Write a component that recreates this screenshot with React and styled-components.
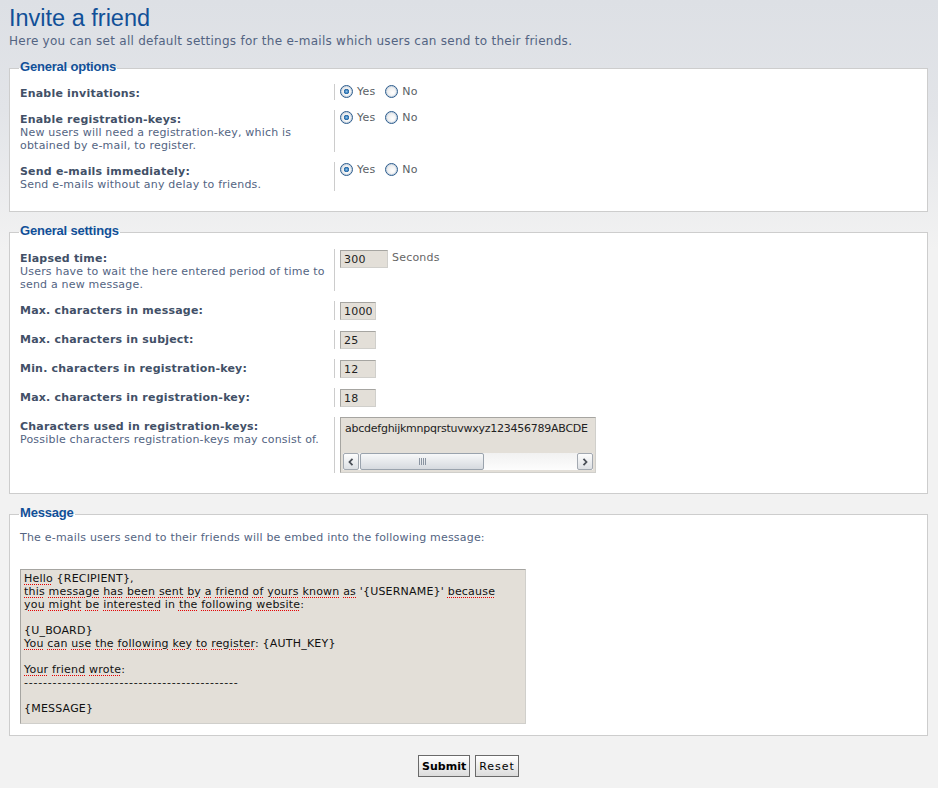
import React from 'react';
import styled, { createGlobalStyle } from 'styled-components';

const GlobalStyle = createGlobalStyle`
  html, body {
    margin: 0;
    padding: 0;
  }
  body {
    min-height: 788px;
    background: #f2f2f2 linear-gradient(#dde0e5 0, #e2e4e8 110px, #f2f2f2 250px) no-repeat;
    font-family: "DejaVu Sans", Verdana, sans-serif;
    font-size: 11px;
    letter-spacing: 0.2px;
    color: #536482;
  }
`;

const Page = styled.div`
  padding: 4px 10px 11px 9px;
`;

const Title = styled.h1`
  margin: 0;
  font: normal 23.5px/28px "Liberation Sans", Arial, sans-serif;
  letter-spacing: 0;
  color: #115098;
`;

const Intro = styled.p`
  margin: 1px 0 0;
  font-size: 12px;
  line-height: 16px;
  letter-spacing: 0.27px;
`;

const Fieldset = styled.fieldset`
  margin: ${p => (p.$first ? 11 : 12)}px 0 0;
  padding: ${p => p.$top}px 10px ${p => p.$bottom}px 10px;
  min-width: 0;
  border: 1px solid #cdcdcd;
  background: #fff;
`;

const Legend = styled.legend`
  margin-left: -1px;
  padding: 0 1px 3px;
  font: bold 13px/14px "Liberation Sans", Arial, sans-serif;
  letter-spacing: -0.2px;
  color: #115098;
`;

const Row = styled.div`
  display: flex;
  & + & {
    margin-top: 10px;
  }
`;

const Dt = styled.div`
  flex: none;
  box-sizing: border-box;
  width: 314px;
  padding: 3px 4px 0 0;
  line-height: 13px;
`;

const Label = styled.div`
  font-weight: bold;
  color: #425067;
`;

const Explain = styled.div`
  color: #536482;
`;

const Dd = styled.div`
  flex: 1;
  display: flex;
  align-items: flex-start;
  gap: 4px;
  padding-left: 5px;
  border-left: 1px solid #cccccc;
  line-height: 13px;
  color: #666;
`;

const RadioGroup = styled.div`
  display: flex;
  gap: 10px;
`;

const RadioLabel = styled.label`
  display: inline-flex;
  align-items: center;
  gap: 4px;
  color: #5a5f66;
`;

const Radio = styled.input.attrs({ type: 'radio' })`
  appearance: none;
  box-sizing: border-box;
  width: 13px;
  height: 13px;
  margin: 1px 0 0;
  border: 1px solid #2b5b8c;
  border-radius: 50%;
  background: radial-gradient(circle at 60% 60%, #ffffff 0, #e9e9e9 70%, #d9d9d9 100%);
  box-shadow: inset 0 0 0 1px #c9d6e3;

  &:checked {
    background:
      radial-gradient(circle, #8fc0e6 0, #3d82be 1.6px, #2a6aa6 2.4px, transparent 3px),
      radial-gradient(circle at 60% 60%, #ffffff 0, #e9e9e9 70%, #d9d9d9 100%);
  }
`;

const fieldBorder = `
  border: 1px solid;
  border-color: #a6a5a1 #d0cfcb #d0cfcb #a6a5a1;
  background: #e3dfd8;
`;

const TextInput = styled.input`
  box-sizing: border-box;
  width: ${p => p.$w}px;
  height: 18px;
  margin: 1px 0 0;
  padding: 0 3px;
  ${fieldBorder}
  font: 11px "DejaVu Sans", Verdana, sans-serif;
  letter-spacing: 0.2px;
  color: #222;
  outline: none;
`;

const Unit = styled.span`
  padding-top: 2px;
  color: #666;
`;

const KeysBox = styled.div`
  box-sizing: border-box;
  width: 256px;
  height: 56px;
  padding: 2px;
  ${fieldBorder}
  display: flex;
  flex-direction: column;
  justify-content: space-between;
`;

const KeysText = styled.div`
  white-space: nowrap;
  padding: 2px 2px 0;
  letter-spacing: -0.25px;
  color: #222;
`;

const ScrollBar = styled.div`
  display: flex;
  gap: 1px;
  height: 17px;
  background: linear-gradient(#f1f1f1, #fdfdfd);
`;

const ScrollButton = styled.div`
  flex: none;
  box-sizing: border-box;
  width: 16px;
  border: 1px solid #a3a9b1;
  border-radius: 2px;
  background: linear-gradient(#fdfdfd, #dde0e4);
  display: flex;
  align-items: center;
  justify-content: center;
`;

const Thumb = styled.div`
  flex: none;
  box-sizing: border-box;
  width: 124px;
  border: 1px solid #9aa3ad;
  border-radius: 2px;
  background: linear-gradient(#f7f8f9, #d6dadf);
  display: flex;
  align-items: center;
  justify-content: center;
`;

const Track = styled.div`
  flex: 1;
`;

const Note = styled.p`
  margin: 0;
  line-height: 13px;
`;

const MessageBox = styled.div`
  box-sizing: border-box;
  width: 506px;
  height: 155px;
  margin-top: 25px;
  padding: 2px 3px;
  ${fieldBorder}
  overflow: hidden;
  white-space: pre;
  line-height: 13px;
  letter-spacing: 0.2px;
  color: #111;
`;

const Misspelt = styled.span`
  text-decoration: underline dotted #e60000;
  text-decoration-thickness: 1px;
  text-underline-offset: 2px;
`;

const Dashes = styled.span`
  letter-spacing: 0.8px;
`;

const Buttons = styled.div`
  display: flex;
  justify-content: center;
  gap: 5px;
  margin-top: 19px;
`;

const Button = styled.button`
  box-sizing: border-box;
  height: 22px;
  margin: 0;
  padding: 0 3px;
  border: 1px solid #6a6a6a;
  background: linear-gradient(#ffffff, #dcdcdc);
  font: ${p => (p.$primary ? 'bold' : 'normal')} 11px "DejaVu Sans", Verdana, sans-serif;
  letter-spacing: ${p => (p.$primary ? '0' : '1px')};
  color: #000;
`;

const Chevron = ({ dir }) => (
  <svg width="6" height="8" viewBox="0 0 6 8">
    <path
      d={dir === 'left' ? 'M4.5 0.8 L1.5 4 L4.5 7.2' : 'M1.5 0.8 L4.5 4 L1.5 7.2'}
      fill="none"
      stroke="#4a4f57"
      strokeWidth="1.8"
    />
  </svg>
);

const Grip = () => (
  <svg width="7" height="7" viewBox="0 0 7 7">
    {[0.5, 2.5, 4.5, 6.5].map(x => (
      <line key={x} x1={x} y1="0" x2={x} y2="7" stroke="#8a94a1" strokeWidth="1" />
    ))}
  </svg>
);

const YesNo = ({ name }) => (
  <RadioGroup>
    <RadioLabel>
      <Radio name={name} defaultChecked />
      Yes
    </RadioLabel>
    <RadioLabel>
      <Radio name={name} />
      No
    </RadioLabel>
  </RadioGroup>
);

// every lowercase word got flagged by the (non english) spell checker, "in" did not
const markWords = line =>
  line.split(/([A-Za-z]+)/).map((part, i) =>
    /^[A-Za-z]+$/.test(part) && part !== part.toUpperCase() && part !== 'in' ? (
      <Misspelt key={i}>{part}</Misspelt>
    ) : (
      part
    )
  );

const messageLines = [
  'Hello {RECIPIENT},',
  "this message has been sent by a friend of yours known as '{USERNAME}' because",
  'you might be interested in the following website:',
  '',
  '{U_BOARD}',
  'You can use the following key to register: {AUTH_KEY}',
  '',
  'Your friend wrote:',
  '-'.repeat(45),
  '',
  '{MESSAGE}',
];

const options = [
  { name: 'enable', label: 'Enable invitations:' },
  {
    name: 'keys',
    label: 'Enable registration-keys:',
    explain: 'New users will need a registration-key, which is obtained by e-mail, to register.',
  },
  { name: 'instant', label: 'Send e-mails immediately:', explain: 'Send e-mails without any delay to friends.' },
];

const limits = [
  { label: 'Max. characters in message:', value: '1000' },
  { label: 'Max. characters in subject:', value: '25' },
  { label: 'Min. characters in registration-key:', value: '12' },
  { label: 'Max. characters in registration-key:', value: '18' },
];

export default function App() {
  return (
    <Page>
      <GlobalStyle />
      <Title>Invite a friend</Title>
      <Intro>Here you can set all default settings for the e-mails which users can send to their friends.</Intro>

      <Fieldset $first $top={7} $bottom={20}>
        <Legend>General options</Legend>
        {options.map(o => (
          <Row key={o.name}>
            <Dt>
              <Label>{o.label}</Label>
              {o.explain && <Explain>{o.explain}</Explain>}
            </Dt>
            <Dd>
              <YesNo name={o.name} />
            </Dd>
          </Row>
        ))}
      </Fieldset>

      <Fieldset $top={8} $bottom={20}>
        <Legend>General settings</Legend>
        <Row>
          <Dt>
            <Label>Elapsed time:</Label>
            <Explain>Users have to wait the here entered period of time to send a new message.</Explain>
          </Dt>
          <Dd>
            <TextInput $w={48} defaultValue="300" />
            <Unit>Seconds</Unit>
          </Dd>
        </Row>
        {limits.map(l => (
          <Row key={l.label}>
            <Dt>
              <Label>{l.label}</Label>
            </Dt>
            <Dd>
              <TextInput $w={36} defaultValue={l.value} />
            </Dd>
          </Row>
        ))}
        <Row>
          <Dt>
            <Label>Characters used in registration-keys:</Label>
            <Explain>Possible characters registration-keys may consist of.</Explain>
          </Dt>
          <Dd>
            <KeysBox>
              <KeysText>abcdefghijkmnpqrstuvwxyz123456789ABCDE</KeysText>
              <ScrollBar>
                <ScrollButton>
                  <Chevron dir="left" />
                </ScrollButton>
                <Thumb>
                  <Grip />
                </Thumb>
                <Track />
                <ScrollButton>
                  <Chevron dir="right" />
                </ScrollButton>
              </ScrollBar>
            </KeysBox>
          </Dd>
        </Row>
      </Fieldset>

      <Fieldset $top={8} $bottom={11}>
        <Legend>Message</Legend>
        <Note>The e-mails users send to their friends will be embed into the following message:</Note>
        <MessageBox>
          {messageLines.map((line, i) => (
            <div key={i}>
              {line.startsWith('-') ? <Dashes>{line}</Dashes> : line ? markWords(line) : '\u00a0'}
            </div>
          ))}
        </MessageBox>
      </Fieldset>

      <Buttons>
        <Button $primary>Submit</Button>
        <Button>Reset</Button>
      </Buttons>
    </Page>
  );
}
